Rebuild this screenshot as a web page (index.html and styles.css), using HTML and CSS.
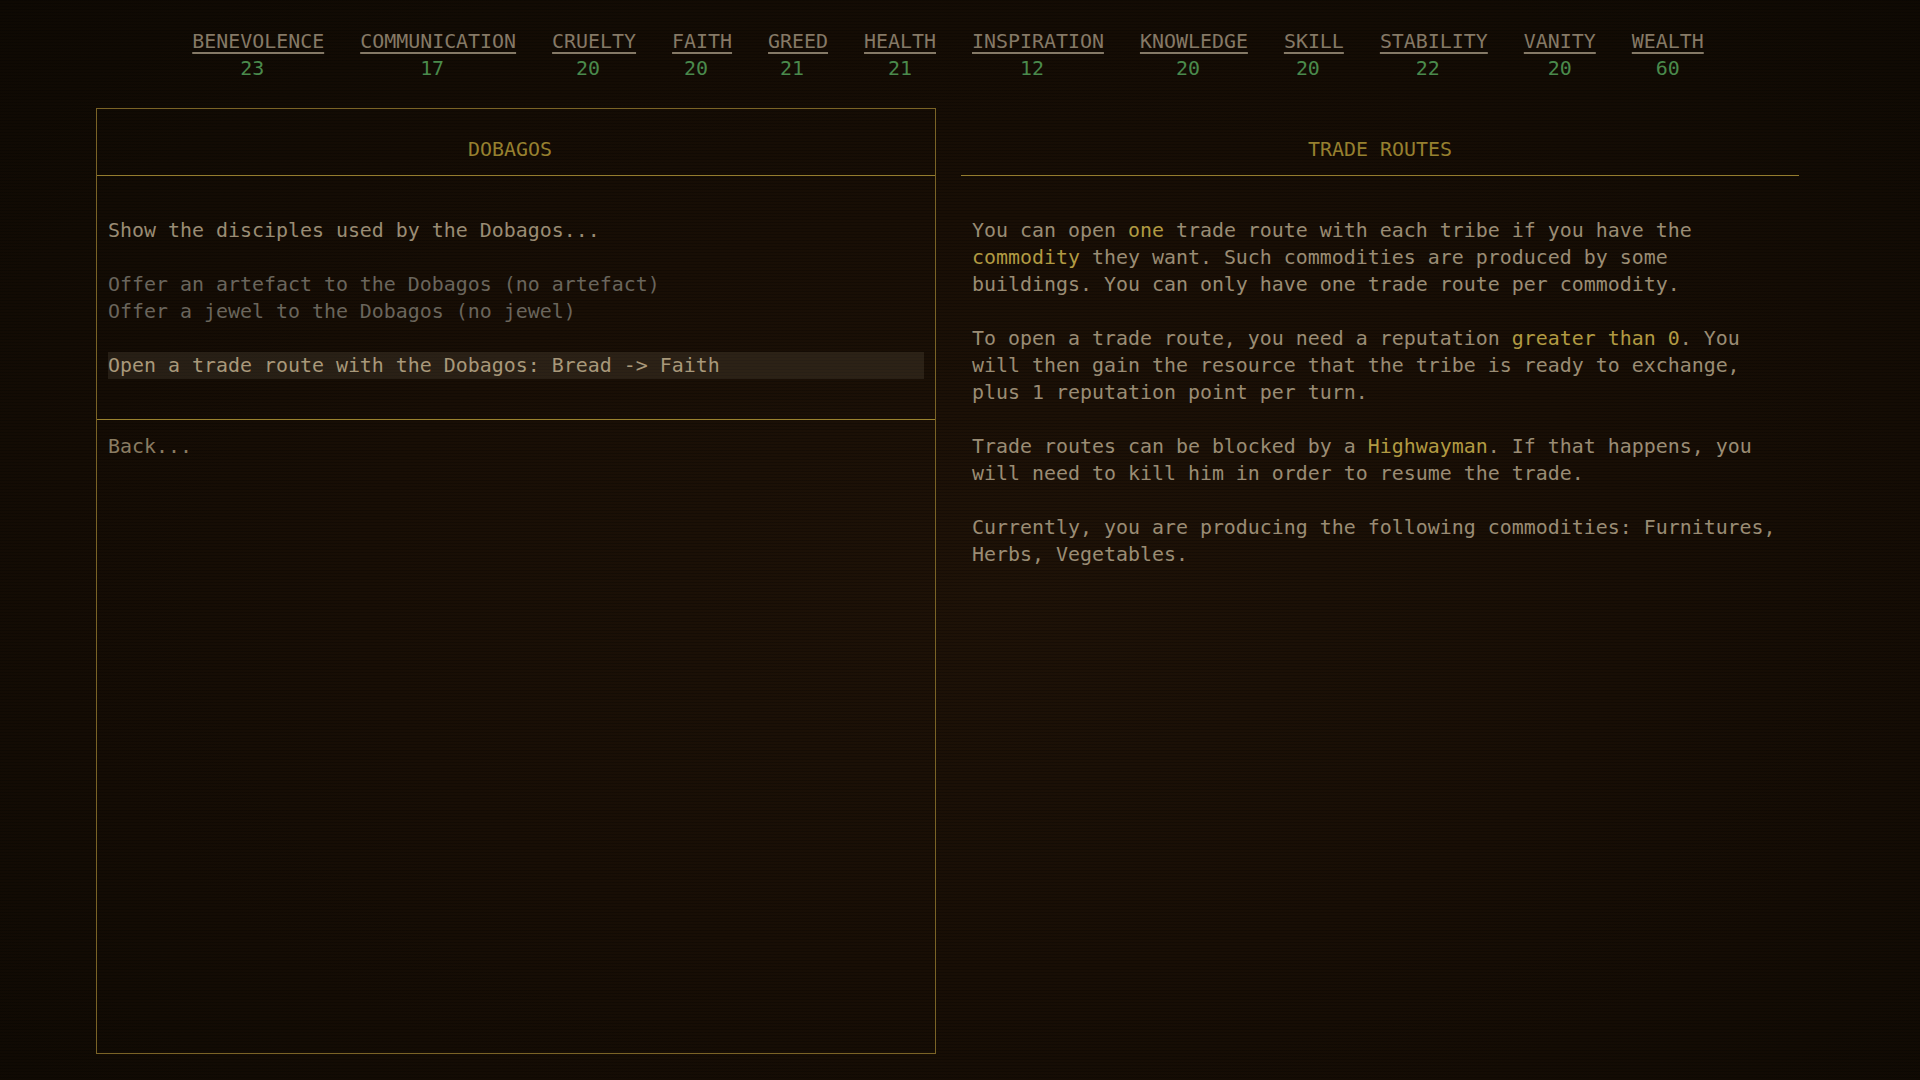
FILE: index.html
```html
<!DOCTYPE html>
<html lang="en">
<head>
  <meta charset="UTF-8">
  <meta name="viewport" content="width=device-width, initial-scale=1.0">
  <title>Dobagos - Trade Routes</title>
  <link rel="stylesheet" href="styles.css">
</head>
<body>
  <!-- Resources of the tribe (odd = name with an odd number of letters, value snaps half a cell left) -->
  <div id="stats">
    <div class="stat odd"><span class="stat-name">BENEVOLENCE</span><span class="stat-value">23</span></div>
    <div class="stat odd"><span class="stat-name">COMMUNICATION</span><span class="stat-value">17</span></div>
    <div class="stat odd"><span class="stat-name">CRUELTY</span><span class="stat-value">20</span></div>
    <div class="stat odd"><span class="stat-name">FAITH</span><span class="stat-value">20</span></div>
    <div class="stat odd"><span class="stat-name">GREED</span><span class="stat-value">21</span></div>
    <div class="stat"><span class="stat-name">HEALTH</span><span class="stat-value">21</span></div>
    <div class="stat odd"><span class="stat-name">INSPIRATION</span><span class="stat-value">12</span></div>
    <div class="stat odd"><span class="stat-name">KNOWLEDGE</span><span class="stat-value">20</span></div>
    <div class="stat odd"><span class="stat-name">SKILL</span><span class="stat-value">20</span></div>
    <div class="stat odd"><span class="stat-name">STABILITY</span><span class="stat-value">22</span></div>
    <div class="stat"><span class="stat-name">VANITY</span><span class="stat-value">20</span></div>
    <div class="stat"><span class="stat-name">WEALTH</span><span class="stat-value">60</span></div>
  </div>

  <div id="main">
    <div class="panel panel-menu">
      <div class="panel-title">DOBAGOS</div>
      <div class="menu-options">
        <div class="option">Show the disciples used by the Dobagos...</div>
        <div class="option-group">
          <div class="option disabled">Offer an artefact to the Dobagos (no artefact)</div>
          <div class="option disabled">Offer a jewel to the Dobagos (no jewel)</div>
        </div>
        <div class="option-group">
          <div class="option selected">Open a trade route with the Dobagos: Bread -&gt; Faith</div>
        </div>
      </div>
      <div class="menu-back">
        <div class="option back">Back...</div>
      </div>
    </div>

    <div class="panel panel-info">
      <div class="panel-title">TRADE ROUTES</div>
      <div class="info-text">
        <p>You can open <span class="hl">one</span> trade route with each tribe if you have the <span class="hl">commodity</span> they want. Such commodities are produced by some buildings. You can only have one trade route per commodity.</p>
        <p>To open a trade route, you need a reputation <span class="hl">greater than 0</span>. You will then gain the resource that the tribe is ready to exchange, plus 1 reputation point per turn.</p>
        <p>Trade routes can be blocked by a <span class="hl">Highwayman</span>. If that happens, you will need to kill him in order to resume the trade.</p>
        <p>Currently, you are producing the following commodities: Furnitures, Herbs, Vegetables.</p>
      </div>
    </div>
  </div>
</body>
</html>
```

FILE: styles.css
```css
* {
  box-sizing: border-box;
}
body {
  margin: 0;
  padding-top: 31px;
  height: 100vh;
  overflow: hidden;
  font-family: "DejaVu Sans Mono", "Liberation Mono", monospace;
  font-size: 19.93px;
  color: #9a8c74;
  background:
    repeating-linear-gradient(to bottom, rgba(0, 0, 0, 0.22) 0, rgba(0, 0, 0, 0.22) 1px, transparent 1px, transparent 3px),
    radial-gradient(ellipse at 52% 55%, #1e1207 0%, #180e05 45%, #0e0903 100%);
}
#stats {
  display: flex;
  justify-content: center;
  gap: 36px;
  width: 1704px;
  margin-left: 96px;
}
.stat {
  display: flex;
  flex-direction: column;
  align-items: center;
}
.stat-name {
  line-height: 22px;
  color: #857966;
  text-decoration: underline;
  text-decoration-thickness: 2px;
  text-underline-offset: 4px;
}
.stat-value {
  margin-top: 5px;
  line-height: 22px;
  color: #4a8a4c;
}
.stat.odd .stat-value {
  padding-right: 12px;
}
#main {
  display: grid;
  grid-template-columns: 840px 840px;
  gap: 24px;
  width: 1704px;
  height: 946px;
  margin: 28px 0 0 96px;
}
.panel {
  display: flex;
  flex-direction: column;
  border: 1px solid transparent;
}
.panel-menu {
  border-color: #7a6326;
}
.panel-title {
  padding: 30px 0 14px;
  line-height: 22px;
  text-align: center;
  color: #96802f;
  border-bottom: 1px solid #957c2e;
}
.panel-menu .panel-title {
  padding-right: 12px;
}
.menu-options {
  padding: 41px 11px 40px;
  border-bottom: 1px solid #9a822f;
  line-height: 27px;
}
.option-group {
  margin-top: 27px;
}
.option.disabled {
  color: #6a655c;
}
.option.selected {
  color: #a8987a;
  background-color: rgba(120, 110, 90, 0.2);
}
.menu-back {
  padding: 13px 11px;
  line-height: 27px;
}
.option.back {
  color: #8a7c62;
}
.info-text {
  padding: 41px 8px 0 11px;
  line-height: 27px;
}
.info-text p {
  margin: 0 0 27px;
}
.hl {
  color: #b19a42;
}
```
